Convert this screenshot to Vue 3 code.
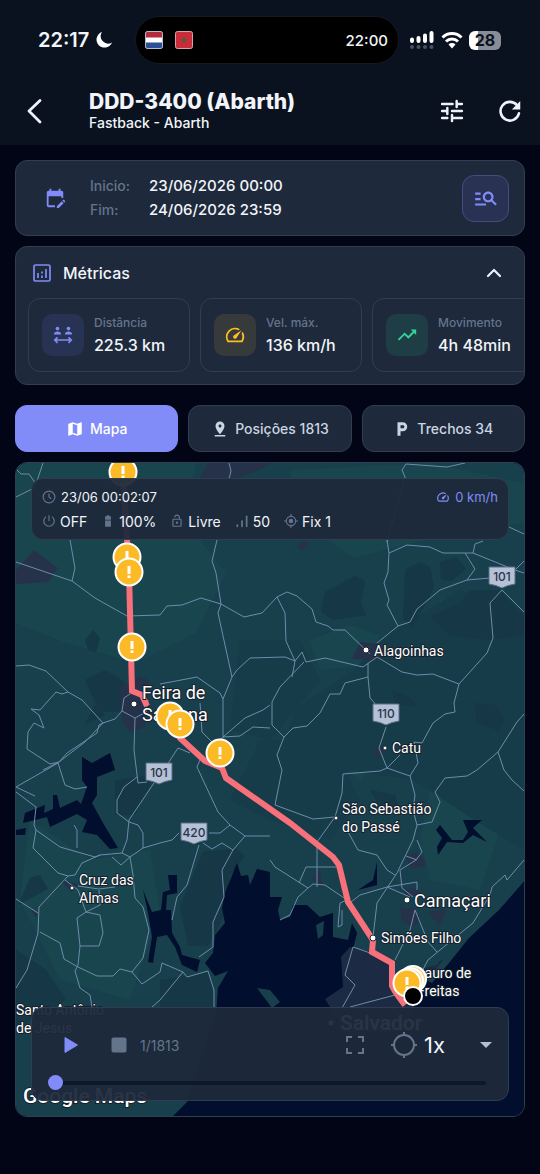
<template>
  <div class="page">
    <header class="top">
      <div class="status-bar">
        <div class="clock">
          <span>22:17</span>
          <svg class="icon-18" viewBox="0 0 18 18"><path d="M7 1a8 8 0 1 0 10 10.400A7.400 7.400 0 0 1 7 1z" fill="#fff" /></svg>
        </div>
        <div class="island">
          <svg class="flag" viewBox="0 0 18 18">
            <rect x="0.500" y="0.500" width="17" height="17" rx="2" fill="#fff" />
            <path d="M1 1h16v5.500H1z" fill="#b32b3e" />
            <path d="M1 11.500h16V17H1z" fill="#2a4f9b" />
            <rect x="0.500" y="0.500" width="17" height="17" rx="2" fill="none" stroke="#b9bcc6" />
          </svg>
          <svg class="flag" viewBox="0 0 18 18">
            <rect x="0.500" y="0.500" width="17" height="17" rx="2" fill="#cb2c3b" stroke="#d3a6ab" />
            <path d="M9 5l1 3h3l-2.400 1.800.9 3L9 11l-2.500 1.800.9-3L5 8h3z" fill="#62572d" />
          </svg>
          <span class="island-time">22:00</span>
        </div>
        <div class="indicators">
          <svg class="signal" viewBox="0 0 26 18">
            <path d="M3 8.500v1.500M9.500 7v3M16 4.500V10M22.500 2v8" stroke="#fff" stroke-width="4" stroke-linecap="round" />
            <g fill="#4a5160">
              <circle cx="3" cy="16" r="2" /><circle cx="9.500" cy="16" r="2" /><circle cx="16" cy="16" r="2" /><circle cx="22.500" cy="16" r="2" />
            </g>
          </svg>
          <svg class="wifi" viewBox="0 0 22 18">
            <g fill="none" stroke="#fff" stroke-width="3">
              <path d="M1.500 6.500a13.500 13.500 0 0 1 19 0" />
              <path d="M5 10.500a8.500 8.500 0 0 1 12 0" />
            </g>
            <path d="M11 17.500L7.500 13.500a5 5 0 0 1 7 0z" fill="#fff" />
          </svg>
          <div class="battery"><span>28</span></div>
        </div>
      </div>
      <div class="toolbar">
        <button type="button" class="icon-btn back" aria-label="Voltar">
          <svg class="icon-26" viewBox="0 0 26 26"><path d="M18 2.500L7 13l11 11" class="line" stroke-width="2.800" /></svg>
        </button>
        <div class="heading">
          <h1>DDD-3400 (Abarth)</h1>
          <p>Fastback - Abarth</p>
        </div>
        <button type="button" class="icon-btn" aria-label="Filtros">
          <svg class="icon-28" viewBox="0 0 24 24">
            <path d="M3.500 6h9M16 3.500v5M16 6h4.500M3.500 12H8M8 9.500v5M12 12h8.500M3.500 18H8M12 15.500v5M12 18h8.500" class="line" stroke-width="2.100" />
          </svg>
        </button>
        <button type="button" class="icon-btn" aria-label="Atualizar">
          <svg class="icon-28" viewBox="0 0 24 24">
            <path d="M18 7A8 8 0 1 0 19.700 14" class="line" stroke-width="2.200" />
            <path d="M20.800 3.500v7.200h-7.200z" fill="#eef2fb" />
          </svg>
        </button>
      </div>
    </header>

    <main class="content">
      <section class="card period">
        <svg class="icon-22 accent period-icon" viewBox="0 0 24 24"><path :d="icons.calendar" /></svg>
        <dl class="dates">
          <dt>Inicio:</dt>
          <dd>23/06/2026 00:00</dd>
          <dt>Fim:</dt>
          <dd>24/06/2026 23:59</dd>
        </dl>
        <button type="button" class="search-btn" aria-label="Pesquisar">
          <svg class="icon-26 accent" viewBox="0 0 24 24"><path :d="icons.search" /></svg>
        </button>
      </section>

      <section class="card metrics">
        <div class="metrics-head">
          <svg class="icon-20" viewBox="0 0 20 20" fill="none" stroke="#818cf8" stroke-width="1.700">
            <rect x="2" y="2" width="16" height="16" rx="1.500" />
            <path d="M6 10v5M10 12.500V15M10 8.500v2M14 6v9" />
          </svg>
          <h2>Métricas</h2>
          <button type="button" class="icon-btn toggle" aria-label="Recolher métricas">
            <svg class="icon-20" viewBox="0 0 20 20"><path d="M4 13l6-6 6 6" class="line" stroke-width="2.200" /></svg>
          </button>
        </div>
        <div class="metric-list">
          <article v-for="m in metrics" :key="m.label" class="metric" :class="m.tone">
            <div class="metric-icon">
              <svg v-if="m.tone === 'indigo'" class="icon-22" viewBox="0 0 24 24">
                <circle cx="6" cy="5" r="2" /><circle cx="18" cy="5" r="2" />
                <path d="M2 11.500c0-2 2-3.300 4-3.300s4 1.300 4 3.300zM14 11.500c0-2 2-3.300 4-3.300s4 1.300 4 3.300z" />
                <path d="M3 17.500h18M6 14.500l-3 3 3 3M18 14.500l3 3-3 3" fill="none" stroke="currentColor" stroke-width="1.800" />
              </svg>
              <svg v-else class="icon-22" viewBox="0 0 24 24"><path :d="m.icon" /></svg>
            </div>
            <div class="metric-text">
              <span class="metric-label">{{ m.label }}</span>
              <span class="metric-value">{{ m.value }}</span>
            </div>
          </article>
        </div>
      </section>

      <nav class="tabs">
        <button v-for="tab in tabs" :key="tab.label" type="button" class="tab" :class="{ active: tab.label === activeTab }" @click="activeTab = tab.label">
          <svg class="icon-18" viewBox="0 0 24 24"><path :d="tab.icon" /></svg>
          <span>{{ tab.label }}</span>
        </button>
      </nav>

      <section class="map-card">
        <!-- Dark styled map: land patches, towns, water, roads, then the track -->
        <svg class="map" viewBox="16 463 508 653" preserveAspectRatio="xMidYMid slice">
          <rect x="16" y="463" width="508" height="653" fill="#173f4c" />
          <g fill="#19454f">
            <path d="M16 463h180l-10 60 40 50-30 60-60 30-70-20-50-20z" />
            <path d="M290 470l140-7 94 20v40l-90 15-80 20-60-40z" />
            <path d="M310 640l40-15 30 10-10 30-50 5zM330 700l40 20 10 30-20 30-25-20zM30 820l60 40 60-10 10 60-30 90-70-20-40-80zM430 790l50 10 20 30-20 60-50-10-10-40zM440 600l20-5 10 25-20 10-12-10z" />
          </g>
          <g fill="#163c49">
            <path d="M380 640l80-50 64 30v230l-50-30-60-40-70-10-70 20 20-80 60-40z" />
            <path d="M260 740l70 0 30 60-30 40-60-20-40-20z" />
            <path d="M240 640l60 0 20 40-50 60-40-10z" />
          </g>
          <g fill="#163745">
            <path d="M325 592l30-16 10 5-4 22 5 12-33 5-12-8z" />
            <path d="M405 570l15-8 10 5 4 20-10 20-12 20-9-8z" />
            <path d="M470 590l30 0 24 25v20l-34 5-40-4-20-20 30-12z" />
            <path d="M85 640l8-10 7 8-4 14-8-2zM85 680l20-10 20 12-5 30-20 0zM392 690l18 8 8 10-22-4zM475 703l20 2 10 14-6 12-22-8zM440 562l16-5 10 12-15 12-10-2z" />
            <path d="M203 852l32-4 10 8-15 20-6 40-16 30-20 0-8-40z" />
            <path d="M16 950l30 20 20 30-50 30zM160 980l50-8 4 35-54 4zM370 790l25 5 5 15-20-3z" />
            <path d="M115 780l40-5-20 40-20 0zM30 878l10-3 8 14-30 16zM95 705l10 10-20 10z" />
          </g>
          <g fill="#263249">
            <path d="M16 570l18-20 24 18-10 14-32 2z" />
            <path d="M200 478l8-15h64l-20 10-30 10z" />
            <path d="M120 688l20-12 8 4 2 30-6 18-14 4-8-10z" />
            <path d="M360 642l18 2 14 8-16 8-24-1zM375 745l10 3-4 8-6 2zM297 546l8-6 4 4-8 7z" />
            <path d="M405 855l15-2 7 12-15 4zM400 905l15 3 10 12-10 5-12-10zM427 912l18-4-5 18zM312 878l8-8 3 18zM60 880l18 4-6 8zM30 908l8 4-2 6zM403 890l14-2 6 12-10 6z" />
          </g>
          <g fill="#010e2d">
            <path d="M82 757l10 6 18-10 5 17-18 7v18l-5 8 11 20 15 25-8 1-13-14-15-3 5-12-10-6-27 13-3-10-24 6 2-10 20-8-1 8 9-4V795h4l3 13 17-8 4 4 6-17-5-7z" />
            <path d="M16 830l10-2-1 7h-9z" />
            <path d="M168 875h9v18l-10 2-1 15 5 0 1 23 8 14 2 8 18 5-3 12-15-7-7-18-8-12-10 2-4 26-5-1 4-25-4-24-5-23 9 22 9-2 2-18 7-2z" />
            <path d="M440 825l12 15 11 0 5-8-5-12h19l-9 8 14 14-14-7-10 8-16-1-9 13-1-8 5-9-6-8z" />
            <path d="M377 862v23l-19 5 15-10z" />
            <path d="M237 863l4 13 7-1 2 10 7-16 13 3 0 25h12l-4 13 2 10 10-3 3-12h14l13 12 13-4v24l15 3 4-17 5 10-5 20 40 10 40 20 17-20 20-25 30-28 37-42V1117H172l15-15 29-87 2-27 10-17-13 5-10-13 8-10 2-18 10-12-3-15 3-15z" />
          </g>
          <path d="M350 947l43 10 35 5 15-2-25 30-10 40-60 5-23-36 18-12-2-30z" fill="#1c2b43" />
          <path d="M372 940l40-45 60 20-35 50-42 10z" fill="#173f4c" />
          <path d="M400 908l15 0 5 12-8 8-10-8zM428 912l18-3-6 18z" fill="#263249" />
          <path d="M316 925l8-4-1 14-5 4zM257 988l13 2 10 12-8 6z" fill="#173f4c" />
          <g fill="none" stroke="#6f8baa" stroke-width="1" stroke-linejoin="round">
            <path v-for="(d, i) in roads" :key="i" :d="d" />
          </g>

          <g v-for="s in shields" :key="s.y">
            <path :d="`M${s.x - 13} ${s.y - 10}h26v17q-7 1-13 4q-6-3-13-4z`" fill="#b4c1d6" stroke="#5d6d86" stroke-width="1" />
            <text :x="s.x" :y="s.y + 4" class="shield-text">{{ s.no }}</text>
          </g>

          <path d="M123 475L129 572L132 691L142 695L147 706M166 716L180 738L205 761L222 768L226 778L290 823L333 857L339 865L348 902L373 940L372 952L392 963V986Q396 994 405 1005" fill="none" stroke="#f8707a" stroke-width="6" />

          <g v-for="c in cities" :key="c.lines[0]">
            <circle :cx="c.dx" :cy="c.dy" :r="c.r" fill="#fff" stroke="#1b2735" stroke-width="1" />
            <text v-for="(line, i) in c.lines" :key="line" :x="c.x" :y="c.y + i * c.step" class="city" :class="c.size">{{ line }}</text>
          </g>

          <circle cx="413" cy="979" r="13" fill="#f8d98c" stroke="#fff" stroke-width="2" />
          <circle cx="410" cy="981" r="13" fill="#f8d98c" stroke="#fff" stroke-width="2" />
          <g v-for="(p, i) in alerts" :key="i">
            <circle :cx="p[0]" :cy="p[1]" r="13.500" fill="#fcbb26" stroke="#fff" stroke-width="2" />
            <path :d="`M${p[0]} ${p[1] - 6}v8m0 1.500v2.500`" stroke="#fff" stroke-width="3" />
          </g>
          <circle cx="413" cy="996" r="9" fill="#000" stroke="#fff" stroke-width="2" />
          <text x="23" y="1103" class="city google">Google Maps</text>
        </svg>

        <div class="overlay info">
          <div class="info-row spread">
            <span class="info-item small">
              <svg class="icon-14" viewBox="0 0 24 24" fill="none" stroke="#64748b" stroke-width="2"><circle cx="12" cy="12" r="10" /><path d="M12 6v6l4 3" /></svg>
              23/06 00:02:07
            </span>
            <span class="info-item small accent">
              <svg class="icon-14" viewBox="0 0 24 24"><path :d="icons.speed" /></svg>
              0 km/h
            </span>
          </div>
          <div class="info-row">
            <span class="info-item">
              <svg class="icon-14" viewBox="0 0 24 24" fill="none" stroke="#64748b" stroke-width="2"><path d="M12 2v10M7 4.500a9 9 0 1 0 10 0" /></svg>
              OFF
            </span>
            <span class="info-item">
              <svg class="icon-14 muted" viewBox="0 0 24 24"><path d="M10 2h4v2h3v6H7V4h3zM7 11h10v11H7z" /></svg>
              100%
            </span>
            <span class="info-item">
              <svg class="icon-14 muted" viewBox="0 0 24 24"><path :d="icons.lock" /></svg>
              Livre
            </span>
            <span class="info-item">
              <svg class="icon-14" viewBox="0 0 24 24" stroke="#64748b" stroke-width="3" stroke-linecap="round"><path d="M4 19v2M12 12v9M20 4v17" /></svg>
              50
            </span>
            <span class="info-item">
              <svg class="icon-14" viewBox="0 0 24 24" fill="none" stroke="#64748b" stroke-width="2"><circle cx="12" cy="12" r="8" /><circle cx="12" cy="12" r="3" fill="#64748b" /><path d="M12 0v4M12 20v4M0 12h4M20 12h4" /></svg>
              Fix 1
            </span>
          </div>
        </div>

        <div class="overlay player">
          <div class="controls">
            <button type="button" class="icon-btn" aria-label="Reproduzir">
              <svg class="icon-18" viewBox="0 0 18 18"><path d="M3 1.500L15.500 9 3 16.500z" fill="#818cf8" stroke="#818cf8" stroke-linejoin="round" /></svg>
            </button>
            <button type="button" class="icon-btn stop" aria-label="Parar">
              <svg class="icon-18" viewBox="0 0 18 18"><rect x="1.500" y="1.500" width="15" height="15" rx="2" fill="#64748b" /></svg>
            </button>
            <span class="counter">1/1813</span>
            <button type="button" class="icon-btn fit" aria-label="Enquadrar">
              <svg class="icon-18" viewBox="0 0 18 18"><path d="M1 6V1h5M12 1h5v5M17 12v5h-5M6 17H1v-5" fill="none" stroke="#64748b" stroke-width="2" /></svg>
            </button>
            <button type="button" class="icon-btn locate" aria-label="Centralizar">
              <svg class="icon-28" viewBox="0 0 28 28"><path d="M14 1v4M14 23v4M1 14h4M23 14h4" stroke="#64748b" stroke-width="2" /><circle cx="14" cy="14" r="10" fill="none" stroke="#64748b" stroke-width="2" /></svg>
            </button>
            <label class="speed">
              <select v-model="rate" aria-label="Velocidade">
                <option>1x</option>
                <option>2x</option>
                <option>4x</option>
              </select>
              <svg class="caret" viewBox="0 0 12 6"><path d="M0 0h12L6 6z" fill="#b4bfd2" /></svg>
            </label>
          </div>
          <input v-model="position" class="slider" type="range" min="1" max="1813" aria-label="Posição no percurso" />
        </div>
      </section>
    </main>
  </div>
</template>

<script setup>
import { ref } from 'vue';

const icons = {
  calendar: 'M12 22H5c-1.110 0-2-.9-2-2l.01-14c0-1.100.88-2 1.990-2h1V2h2v2h8V2h2v2h1c1.100 0 2 .9 2 2v6h-2v-2H5v10h7v2zm10.130-5.010l.71-.71c.39-.39.39-1.020 0-1.410l-.71-.71c-.39-.39-1.020-.39-1.410 0l-.71.71 2.120 2.120zm-.71.71l-5.300 5.300H14v-2.120l5.300-5.300 2.120 2.120z',
  search: 'M7 9H2V7h5v2zm0 3H2v2h5v-2zm13.590 7l-3.830-3.830c-.8.52-1.740.83-2.760.83-2.760 0-5-2.240-5-5s2.240-5 5-5 5 2.240 5 5c0 1.020-.31 1.960-.83 2.750L22 17.590 20.590 19zM17 11c0-1.650-1.350-3-3-3s-3 1.350-3 3 1.350 3 3 3 3-1.350 3-3zM2 19h10v-2H2v2z',
  speed: 'M20.380 8.570l-1.230 1.850a8 8 0 0 1-.22 7.580H5.070A8 8 0 0 1 15.580 6.850l1.850-1.230A10 10 0 0 0 3.350 19a2 2 0 0 0 1.720 1h13.850a2 2 0 0 0 1.740-1 10 10 0 0 0-.27-10.440zm-9.790 6.840a2 2 0 0 0 2.830 0l5.660-8.490-8.490 5.660a2 2 0 0 0 0 2.830z',
  trend: 'M16 6l2.290 2.290-4.880 4.880-4-4L2 16.590 3.410 18l6-6 4 4 6.300-6.290L22 12V6z',
  lock: 'M12 17c1.100 0 2-.9 2-2s-.9-2-2-2-2 .9-2 2 .9 2 2 2zm6-9h-1V6c0-2.760-2.240-5-5-5S7 3.240 7 6h1.900c0-1.710 1.390-3.100 3.100-3.100 1.710 0 3.100 1.390 3.100 3.100v2H6c-1.100 0-2 .9-2 2v10c0 1.100.9 2 2 2h12c1.100 0 2-.9 2-2V10c0-1.100-.9-2-2-2zm0 12H6V10h12v10z',
  map: 'M20.500 3l-.16.03L15 5.100 9 3 3.360 4.900c-.21.07-.36.25-.36.48V20.500c0 .28.22.5.5.5l.16-.03L9 18.900l6 2.100 5.640-1.900c.21-.07.36-.25.36-.48V3.500c0-.28-.22-.5-.5-.5zM15 19l-6-2.110V5l6 2.110V19z',
  pin: 'M18 8c0-3.310-2.690-6-6-6S6 4.690 6 8c0 4.500 6 11 6 11s6-6.500 6-11zm-8 0c0-1.100.9-2 2-2s2 .9 2 2-.89 2-2 2c-1.100 0-2-.9-2-2zM5 20v2h14v-2H5z',
  parking: 'M13 3H6v18h4v-6h3c3.310 0 6-2.690 6-6s-2.690-6-6-6zm.2 8H10V7h3.200c1.100 0 2 .9 2 2s-.9 2-2 2z'
};

const metrics = [
  { label: 'Distância', value: '225.3 km', tone: 'indigo' },
  { label: 'Vel. máx.', value: '136 km/h', tone: 'amber', icon: icons.speed },
  { label: 'Movimento', value: '4h 48min', tone: 'green', icon: icons.trend }
];

const tabs = [
  { label: 'Mapa', icon: icons.map },
  { label: 'Posições 1813', icon: icons.pin },
  { label: 'Trechos 34', icon: icons.parking }
];
const activeTab = ref('Mapa');
const rate = ref('1x');
const position = ref(1);

const roads = [
  'M16 469l5 5h8l7 10 7-21M36 484v3l-20 10',
  'M229 463l2 8-2 8M405 477l-3-7 4-6 41 3 18-4M405 477l-18 65',
  'M16 562L72 581L95 598L127 616L160 615L167 606L182 605L201 598L221 604L244 617L262 613L277 597L287 592L297 596L312 609L316 622L328 626L333 630L345 630L370 654',
  'M70 540L75 568L72 581',
  'M217 540L212 561L216 573L221 604L218 613L232 677L223 699V738',
  'M232 677L237 670L250 658L285 657L295 661L302 652L306 662L325 658L363 667L377 657L402 672L417 675L433 674L459 684',
  'M16 666L29 665L46 671L68 692L82 700L103 723L115 719L122 711L124 698L130 694M122 711L135 718L146 712L148 700',
  'M103 723L99 725L97 733L67 753L59 762L43 770M103 723L85 742L59 762M68 692L62 694L56 692L40 710L31 709L39 715L44 728L34 723L28 732L27 749L50 764L59 762',
  'M135 718L134 750L138 783L147 782M137 777L124 787L117 800V813L129 822L138 825L143 833V848',
  'M154 783L129 820L127 840L122 853L100 855L95 857L60 847L36 830L34 825L36 807L16 792M16 787L58 763L65 785L75 789L87 787M16 787L35 796',
  'M36 830L33 848L58 873L68 876L75 875L82 863L100 855M74 825L77 830V848M112 857L121 865L130 857L143 848L160 843L172 840L179 833',
  'M122 853L130 857L133 875L135 898L143 907L149 930L143 958L132 972L142 984L160 972L162 963L183 972L187 977L208 971L214 990V1008M183 972L160 1000L152 1007',
  'M68 876L39 907L38 933L27 970L16 988M16 899L38 913M65 880L78 890L86 912L100 915L103 933L99 946H80L77 918L86 912M80 946L78 965L75 971L80 988L90 995L92 1007M78 886L99 889L115 887M99 890L100 905L86 912',
  'M40 932L60 943L64 959L78 967L97 976H113L120 969L132 972',
  'M199 845L187 885L177 897L172 920M203 843L212 849L222 843L233 850L245 836H270M209 833H220L230 825L245 836M230 825L218 812L203 780L197 767L200 760',
  'M165 768L178 748L190 753M200 703L202 732L212 742L223 738M160 684L197 677L220 693L223 699M233 850L222 870L224 897L213 922V947L199 957',
  'M223 737L245 718L263 710L270 705M223 737L240 736L253 727L270 728M277 597L285 613L286 641L295 661L292 677M304 662L280 687L272 702V725L284 737L277 755L282 770L275 805L313 819L335 817',
  'M284 737L293 728L307 726L320 713L330 694H340L345 683L368 677M368 663V677L370 698L378 707M386 727L379 748L387 768',
  'M377 643L398 626L387 605L389 600L384 583L388 572L389 553L387 540M389 553L407 545L430 547L443 553H473L475 544L483 541M473 553L515 570L524 561M509 527L524 534M515 570L524 573',
  'M465 553L475 569L467 580L440 590L417 609L410 622L398 626M467 580L490 578M502 590L490 603L493 638L487 653L459 684L454 703L455 712L445 714L433 723L422 743L414 742M414 742L418 763L410 776M502 590L524 612',
  'M524 714L517 722L498 752L477 770L467 776L445 778L435 792L440 802L432 822L417 825L413 840L397 873L377 903L373 937M498 752L504 770L512 780L524 791',
  'M400 755L387 768L380 771L343 774L342 793L335 817L317 842V887M387 768L410 776L415 795L413 810L417 825M347 830L358 850L377 855L387 870L395 875M417 840L422 852L416 860L400 870L402 888L413 897',
  'M270 860L275 867L308 888L313 884L325 885L347 900M337 867H306L299 883M308 888L298 897L290 915L280 920M347 900L340 903L338 927L342 925V910M347 905L360 895L387 887L417 882V890',
  'M524 860L507 880L505 875L492 887L490 895L473 923L440 950L428 960L420 975M415 910L428 942L437 952M415 910L410 930L395 960M387 887L410 897M406 856L417 860M353 947L345 975L355 985L342 1008M353 947L373 954M395 995L350 1007'
];

const shields = [
  { no: '101', x: 502, y: 577 },
  { no: '110', x: 386, y: 714 },
  { no: '101', x: 159, y: 773 },
  { no: '420', x: 194, y: 833 }
];

const cities = [
  { lines: ['Feira de', 'Santana'], x: 142, y: 699, step: 22, dx: 134, dy: 704, r: 3, size: 'large' },
  { lines: ['Alagoinhas'], x: 374, y: 656, step: 0, dx: 366, dy: 650, r: 3, size: 'normal' },
  { lines: ['Catu'], x: 392, y: 753, step: 0, dx: 385, dy: 748, r: 2, size: 'normal' },
  { lines: ['São Sebastião', 'do Passé'], x: 342, y: 814, step: 18, dx: 336, dy: 818, r: 2, size: 'normal' },
  { lines: ['Cruz das', 'Almas'], x: 79, y: 885, step: 18, dx: 72, dy: 888, r: 2, size: 'normal' },
  { lines: ['Camaçari'], x: 414, y: 907, step: 0, dx: 407, dy: 900, r: 3, size: 'large' },
  { lines: ['Simões Filho'], x: 381, y: 943, step: 0, dx: 373, dy: 938, r: 3, size: 'normal' },
  { lines: ['Lauro de', 'Freitas'], x: 417, y: 978, step: 18, dx: 409, dy: 982, r: 2, size: 'normal' },
  { lines: ['Santo Antônio', 'de Jesus'], x: 16, y: 1015, step: 18, dx: 60, dy: 1030, r: 0, size: 'normal' },
  { lines: ['Salvador'], x: 340, y: 1030, step: 0, dx: 331, dy: 1023, r: 3, size: 'capital' }
];

const alerts = [
  [123, 472], [127, 557], [129, 572], [132, 647], [170, 716], [180, 724], [220, 753], [407, 983]
];
</script>

<style>
body {
  background: #010515;
}
</style>

<style scoped>
.page {
  min-height: 100vh;
  background: #010515;
  color: #f1f5f9;
  font-family: Inter, "Liberation Sans", sans-serif;
}

.page * {
  box-sizing: border-box;
}

svg {
  display: block;
  flex-shrink: 0;
  fill: currentColor;
}

svg[fill="none"] {
  fill: none;
}

button,
select {
  font-family: inherit;
  color: inherit;
  cursor: pointer;
}

.line {
  fill: none;
  stroke: #eef2fb;
  stroke-linecap: round;
  stroke-linejoin: round;
}

.accent {
  color: #818cf8;
}

.muted {
  color: #64748b;
}

.icon-14 {
  width: 14px;
  height: 14px;
}

.icon-18 {
  width: 18px;
  height: 18px;
}

.icon-20 {
  width: 20px;
  height: 20px;
}

.icon-22 {
  width: 22px;
  height: 22px;
}

.icon-26 {
  width: 26px;
  height: 26px;
}

.icon-28 {
  width: 28px;
  height: 28px;
}

.icon-btn {
  display: flex;
  padding: 0;
  background: none;
  border: 0;
}

/* Header */
.top {
  background: #0b121f;
}

.status-bar {
  display: grid;
  grid-template-columns: 1fr 264px 1fr;
  align-items: center;
  height: 80px;
  padding-right: 6px;
}

.clock,
.indicators {
  display: flex;
  align-items: center;
}

.clock {
  gap: 6px;
  padding-left: 38px;
  font-size: 20px;
  font-weight: 600;
}

.island {
  display: flex;
  align-items: center;
  gap: 12px;
  height: 48px;
  padding: 0 10px 0 9px;
  background: #000;
  border: 1px solid #15181f;
  border-radius: 24px;
}

.flag {
  width: 18px;
  height: 18px;
}

.island-time {
  margin-left: auto;
  font-size: 15px;
  font-weight: 500;
}

.indicators {
  gap: 6px;
  padding-left: 10px;
}

.signal {
  width: 26px;
  height: 18px;
}

.wifi {
  width: 22px;
  height: 18px;
}

.battery {
  width: 32px;
  height: 19px;
  border-radius: 6px;
  background: linear-gradient(90deg, #fff 28%, #888d98 28%);
  color: #0b121f;
  font-size: 16px;
  font-weight: 700;
  line-height: 19px;
  text-align: center;
}

.toolbar {
  display: flex;
  align-items: center;
  gap: 30px;
  height: 65px;
  padding: 0 16px 4px 22px;
}

.heading {
  flex: 1;
  padding-left: 11px;
}

h1,
h2,
p,
dl,
dd {
  margin: 0;
}

h1 {
  font-size: 21px;
  font-weight: 800;
  line-height: 24px;
}

.heading p {
  font-size: 14px;
  font-weight: 500;
  line-height: 18px;
}

/* Cards */
.content {
  padding: 15px;
}

.card {
  background: #1e293b;
  border: 1px solid #323e50;
  border-radius: 12px;
}

.period {
  display: flex;
  align-items: center;
  height: 76px;
  padding: 0 15px 0 28px;
}

.dates {
  display: grid;
  grid-template-columns: 59px 1fr;
  flex: 1;
  padding-left: 24px;
  font-size: 15px;
  font-weight: 500;
  line-height: 24px;
}

.dates dt {
  color: #64748b;
  font-size: 14px;
}

.search-btn {
  display: grid;
  place-items: center;
  width: 47px;
  height: 47px;
  padding: 0;
  background: #293252;
  border: 1px solid #434d80;
  border-radius: 12px;
}

.metrics {
  margin-top: 10px;
  padding: 0 0 12px 12px;
  overflow: hidden;
}

.metrics-head {
  display: flex;
  align-items: center;
  gap: 11px;
  height: 51px;
  padding: 0 20px 0 4px;
}

h2 {
  font-size: 16px;
  font-weight: 500;
}

.toggle {
  margin-left: auto;
}

.metric-list {
  display: flex;
  gap: 10px;
  overflow: hidden;
}

.metric {
  display: flex;
  align-items: center;
  flex: 0 0 162px;
  gap: 10px;
  height: 74px;
  padding: 0 13px;
  border: 1px solid #323e50;
  border-radius: 12px;
}

.metric-icon {
  display: grid;
  place-items: center;
  width: 42px;
  height: 42px;
  border-radius: 10px;
}

.indigo .metric-icon {
  background: #283353;
  color: #818cf8;
}

.amber .metric-icon {
  background: #373a3a;
  color: #fbbf24;
}

.green .metric-icon {
  background: #1f3d45;
  color: #34d399;
}

.metric-text {
  display: flex;
  flex-direction: column;
  white-space: nowrap;
}

.metric-label {
  color: #64748b;
  font-size: 12px;
  font-weight: 500;
  line-height: 20px;
}

.metric-value {
  font-size: 16px;
  font-weight: 500;
  line-height: 24px;
}

/* Tabs */
.tabs {
  display: grid;
  grid-template-columns: repeat(3, 1fr);
  gap: 10px;
  margin: 20px 0 10px;
}

.tab {
  display: flex;
  align-items: center;
  justify-content: center;
  gap: 6px;
  height: 47px;
  padding: 0;
  background: #1e293b;
  border: 1px solid #323e50;
  border-radius: 12px;
  color: #cbd5e1;
  font-size: 14px;
  font-weight: 500;
}

.tab.active {
  background: #818cf8;
  border-color: #818cf8;
  color: #fff;
}

/* Map */
.map-card {
  position: relative;
  overflow: hidden;
  border: 1px solid #2f4054;
  border-radius: 12px;
}

.map {
  width: 100%;
  height: auto;
}

.city {
  fill: #fff;
  stroke: #17202c;
  stroke-width: 2px;
  paint-order: stroke;
  font-family: Roboto, sans-serif;
}

.normal {
  font-size: 14px;
}

.large {
  font-size: 18px;
}

.capital {
  font-size: 21px;
  font-weight: 500;
}

.google {
  font-size: 21px;
  font-weight: 500;
}

.shield-text {
  fill: #2a3547;
  font-size: 12px;
  font-weight: 500;
  text-anchor: middle;
}

.overlay {
  position: absolute;
  left: 15px;
  right: 15px;
  background: rgba(30, 41, 59, 0.95);
  border: 1px solid #303c4f;
  border-radius: 12px;
}

.info {
  top: 15px;
  padding: 6px 10px;
}

.info-row {
  display: flex;
  gap: 14px;
  height: 24px;
}

.spread {
  justify-content: space-between;
}

.info-item {
  display: flex;
  align-items: center;
  gap: 4px;
  font-size: 14px;
}

.small {
  gap: 5px;
  font-size: 13px;
}

.player {
  bottom: 15px;
  padding: 8px 16px;
}

.controls {
  display: flex;
  align-items: center;
  height: 58px;
  padding-left: 14px;
}

.stop {
  margin-left: 30px;
}

.counter {
  margin-left: 12px;
  color: #64748b;
  font-size: 14px;
}

.fit {
  margin-left: auto;
}

.locate {
  margin-left: 26px;
}

.speed {
  display: flex;
  align-items: center;
  justify-content: space-between;
  width: 68px;
  margin-left: 6px;
}

select {
  appearance: none;
  padding: 0;
  background: none;
  border: 0;
  font-size: 22px;
}

.caret {
  width: 12px;
  height: 6px;
}

.slider {
  appearance: none;
  display: block;
  width: 100%;
  height: 18px;
  margin: 0;
  padding-right: 6px;
  background: none;
}

.slider::-webkit-slider-runnable-track {
  height: 4px;
  background: #0f172a;
  border-radius: 2px;
}

.slider::-webkit-slider-thumb {
  appearance: none;
  width: 15px;
  height: 15px;
  margin-top: -6px;
  background: #818cf8;
  border-radius: 50%;
}
</style>
